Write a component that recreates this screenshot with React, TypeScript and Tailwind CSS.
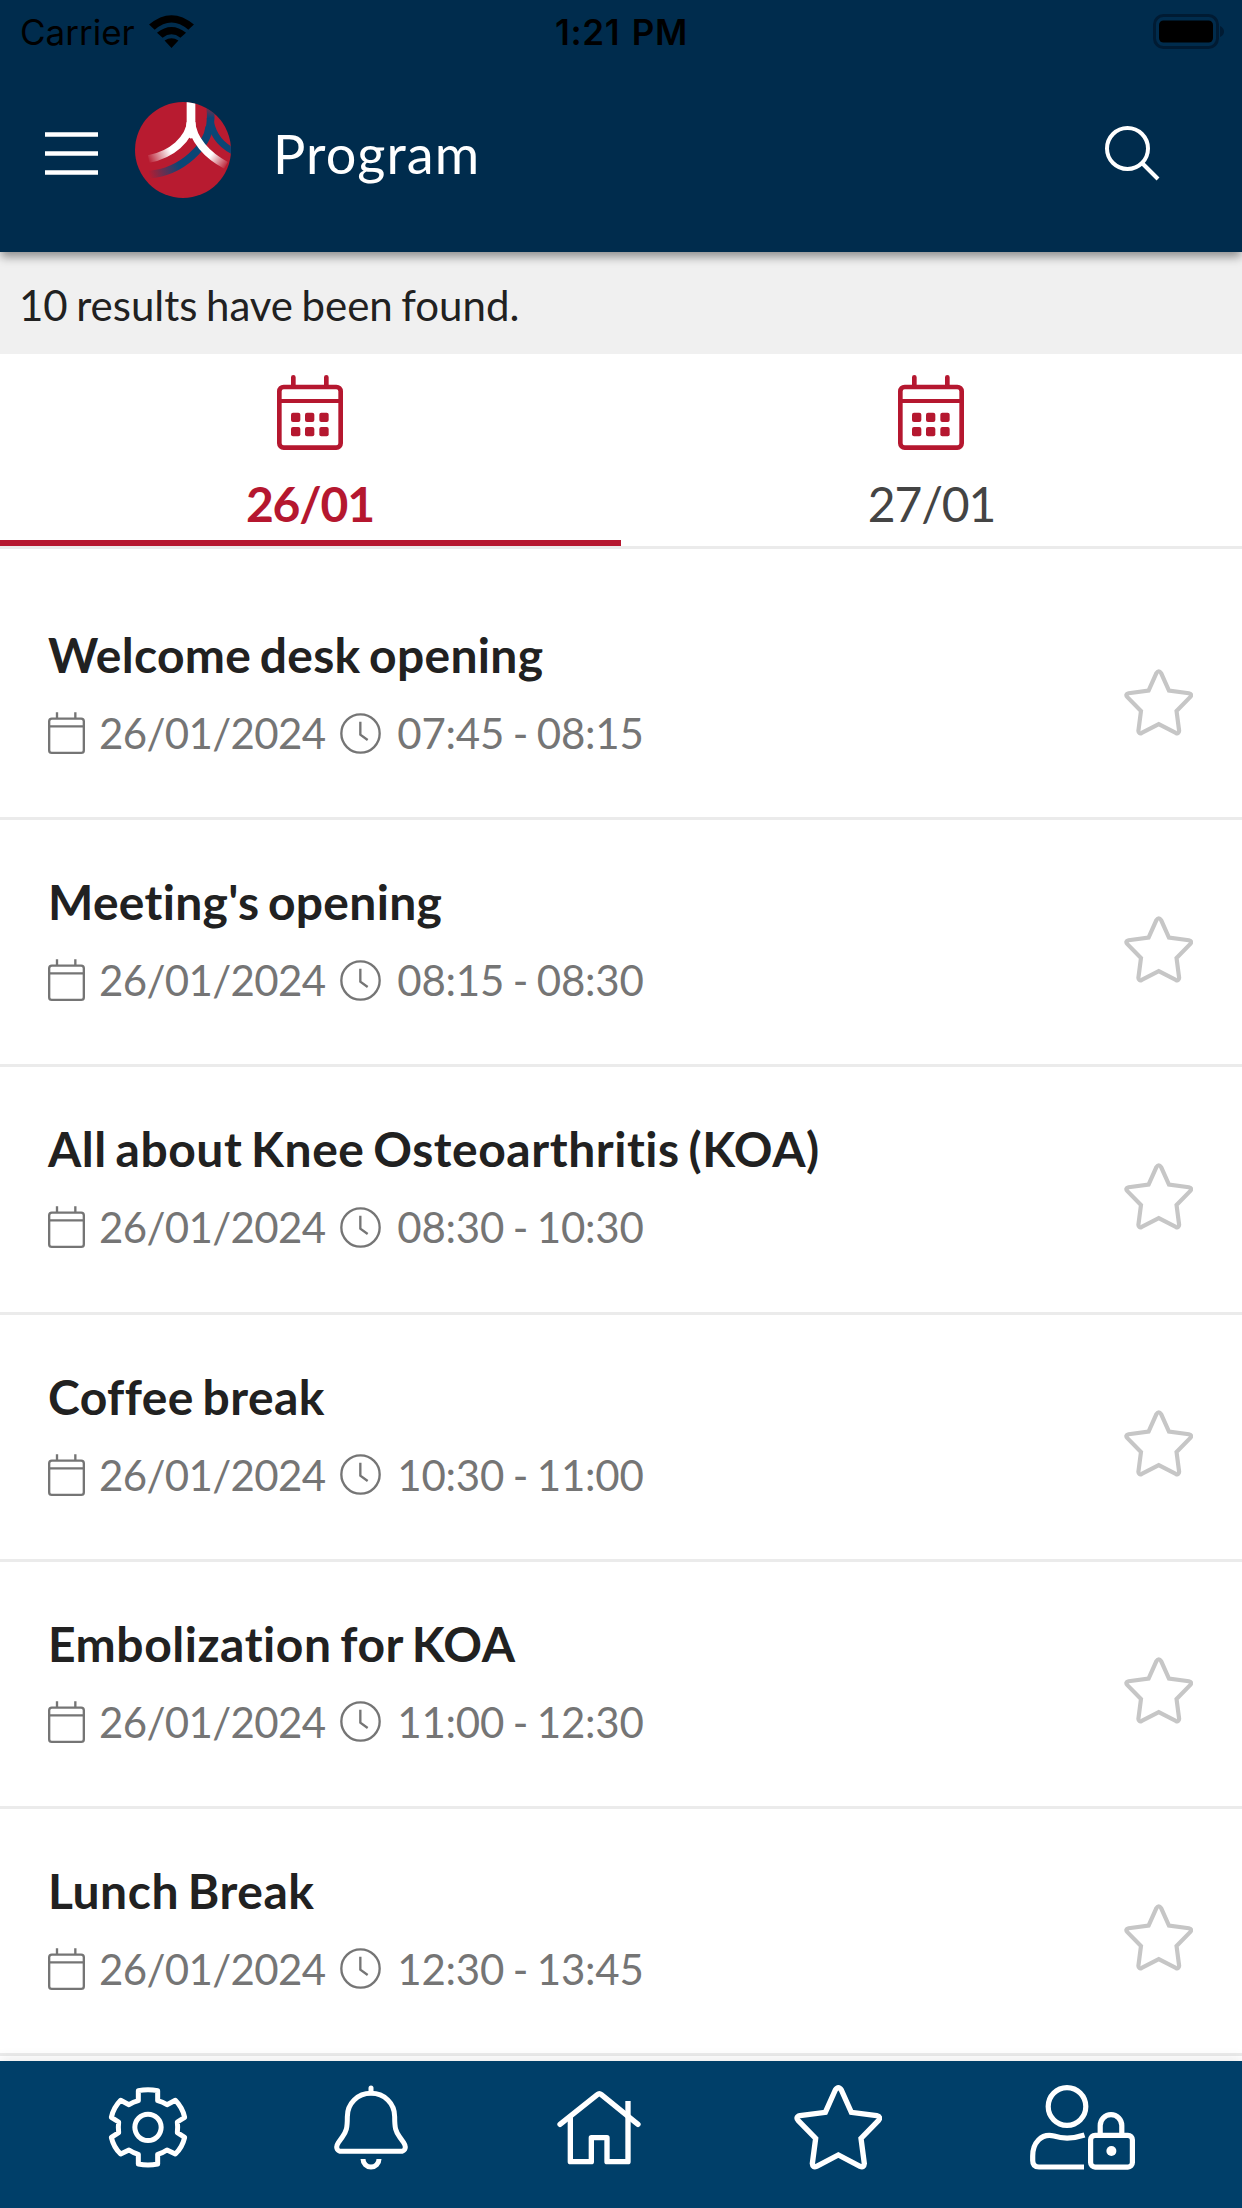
const STAR =
  "M856 127 L886 60 Q895 46 904 60 L934 127 L1010 137 Q1025 141 1015 152 L963 205 L973 281 Q972 294 960 289 L895 255 L830 289 Q818 294 817 281 L827 205 L775 152 Q765 141 780 137 Z";

function Star({ className }: { className: string }) {
  return (
    <svg viewBox="762 45 264 255" className={className} fill="none" stroke="currentColor" strokeWidth="16">
      <path d={STAR} />
    </svg>
  );
}

function TabCalendar() {
  return (
    <svg viewBox="231 105 198 225" className="mr-[2px] h-[75px] w-[66px] text-[#b5172f]" fill="none" stroke="currentColor" strokeWidth="14">
      <rect x="238" y="141" width="184" height="182" rx="13" />
      <path d="M238 183H422" strokeWidth="12" />
      <path d="M280 112V138M379 112V138" strokeLinecap="round" />
      <g fill="currentColor" stroke="none">
        {[273, 315, 358].map((x) => (
          <g key={x}>
            <rect x={x} y="218" width="28" height="28" rx="6" />
            <rect x={x} y="261" width="28" height="28" rx="6" />
          </g>
        ))}
      </g>
    </svg>
  );
}

function SmallCalendar() {
  return (
    <svg viewBox="54 36 111 126" className="h-[42px] w-[37px] shrink-0" fill="none" stroke="currentColor" strokeWidth="7">
      <rect x="57.500" y="56" width="104" height="102.500" rx="8" />
      <path d="M57 79H162M81 37V56M136 37V56" />
    </svg>
  );
}

function Clock() {
  return (
    <svg viewBox="932 38 123 123" className="ml-[15px] size-[41px] shrink-0" fill="none" stroke="currentColor" strokeWidth="7">
      <circle cx="993.5" cy="99.5" r="57.500" />
      <path d="M993 64V103L1015 119" />
    </svg>
  );
}

function Logo() {
  return (
    <svg viewBox="45 36 288 288" className="ml-[37px] size-24 rounded-full">
      <defs>
        <linearGradient id="wl" gradientUnits="userSpaceOnUse" x1="84" y1="212" x2="150" y2="180">
          <stop offset="0" stopColor="#fff" stopOpacity="0" />
          <stop offset="1" stopColor="#fff" />
        </linearGradient>
        <linearGradient id="wr" gradientUnits="userSpaceOnUse" x1="320" y1="232" x2="272" y2="196">
          <stop offset="0" stopColor="#fff" stopOpacity="0" />
          <stop offset="1" stopColor="#fff" />
        </linearGradient>
        <linearGradient id="bl" gradientUnits="userSpaceOnUse" x1="88" y1="262" x2="180" y2="232">
          <stop offset="0" stopColor="#0b4675" stopOpacity="0" />
          <stop offset="1" stopColor="#0b4675" />
        </linearGradient>
        <linearGradient id="bt" gradientUnits="userSpaceOnUse" x1="270" y1="48" x2="270" y2="84">
          <stop offset="0" stopColor="#0b4675" stopOpacity="0.2" />
          <stop offset="1" stopColor="#0b4675" />
        </linearGradient>
      </defs>
      <rect x="45" y="36" width="288" height="288" fill="#b81b30" />
      <g fill="none" strokeWidth="23">
        <path d="M268 110C262 165 190 245 88 254" stroke="url(#bl)" />
        <path d="M270 50C275 80 272 100 267 122" stroke="url(#bt)" />
        <path d="M270 84C274 120 290 158 340 184" stroke="#0b4675" strokeWidth="20" />
        <path d="M214 90C208 150 154 194 86 207" stroke="url(#wl)" />
        <path d="M213 92C218 150 262 196 318 226" stroke="url(#wr)" />
        <path d="M213 30V106" stroke="#fff" strokeWidth="26" />
      </g>
      <path d="M200 96H226L230 132L213 146L194 134Z" fill="#fff" />
    </svg>
  );
}

const sessions = [
  { title: "Welcome desk opening", time: "07:45 - 08:15", tracking: "tracking-[0.300px]" },
  { title: "Meeting's opening", time: "08:15 - 08:30", tracking: "tracking-[0.300px]" },
  { title: "All about Knee Osteoarthritis (KOA)", time: "08:30 - 10:30", tracking: "tracking-[0.550px]" },
  { title: "Coffee break", time: "10:30 - 11:00", tracking: "tracking-[0.450px]" },
  { title: "Embolization for KOA", time: "11:00 - 12:30", tracking: "tracking-[0.550px]" },
  { title: "Lunch Break", time: "12:30 - 13:45", tracking: "tracking-[0.550px]" },
];

export default function App() {
  return (
    <div className="flex h-[2208px] w-[1242px] flex-col overflow-hidden bg-white font-['Lato',sans-serif] text-[#212121] [font-variant-ligatures:none]">
      <header className="relative z-10 h-[252px] shrink-0 bg-[#002c4d] shadow-[0_6px_9px_-1px_rgba(0,0,0,0.4)]">
        <div className="grid h-[60px] grid-cols-3 items-center pl-[20px] pr-[15px] font-['Inter',sans-serif] text-[35px] leading-[60px] text-black">
          <div className="flex items-center gap-[14px]">
            <span className="pt-[2px]">Carrier</span>
            <svg viewBox="448 38 136 100" className="h-[33px] w-[45px]">
              <path d="M448 67Q516 10 584 67L567 83Q516 39 465 83ZM472 92Q516 57 560 92L543 107Q516 86 489 107ZM495 115Q516 102 537 115L516 138Z" />
            </svg>
          </div>
          <span className="pr-[4px] pt-[2px] text-center font-semibold tracking-[0.7px] [word-spacing:2px]">1:21 PM</span>
          <svg viewBox="0 0 74 35" className="h-[35px] w-[74px] justify-self-end">
            <rect x="1.5" y="1.5" width="63" height="32" rx="9" fill="none" stroke="#001b33" strokeWidth="3" />
            <rect x="6" y="6.5" width="54" height="22" rx="4.5" />
            <path d="M67 12Q71 14 71 17.500T67 23Z" fill="#001b33" />
          </svg>
        </div>
        <div className="flex h-[180px] items-center px-[45px] text-white">
          <svg viewBox="0 0 53 43" className="mt-[7px] h-[43px] w-[53px]" stroke="currentColor" strokeWidth="4.500">
            <path d="M0 2.500H53M0 21.500H53M0 40.500H53" />
          </svg>
          <Logo />
          <h1 className="ml-[42px] mt-[8px] text-[54px] leading-[64px] tracking-[1.1px]">Program</h1>
          <svg viewBox="0 0 55 55" className="ml-auto mr-[37px] mt-[6px] size-[55px]" fill="none" stroke="currentColor" strokeWidth="4">
            <circle cx="22.500" cy="22.500" r="20.500" />
            <path d="M37 37L53 53" />
          </svg>
        </div>
      </header>

      <div className="flex h-[102px] shrink-0 items-center bg-[#f0f0f0] pl-[19px] pt-[4px] text-[42px] leading-[50px] tracking-[-0.02px] [word-spacing:-2.200px]">
        10 results have been found.
      </div>

      <div className="grid h-[195px] shrink-0 grid-cols-2 border-b-[3px] border-[#ebebeb] text-[48px] leading-[58px] tracking-[-1.100px]">
        <div className="flex flex-col items-center border-b-[6px] border-[#b5172f] pt-[21px] font-bold text-[#b5172f]">
          <TabCalendar />
          <span className="mr-[1px] mt-[25px]">26/01</span>
        </div>
        <div className="flex flex-col items-center pt-[21px] text-[#444]">
          <TabCalendar />
          <span className="mt-[25px]">27/01</span>
        </div>
      </div>

      <main className="h-[1512px] shrink-0 pt-[24px]">
        {sessions.map((s) => (
          <div key={s.title} className="flex h-[247.200px] items-start justify-between border-b-[3px] border-[#ebebeb] pl-[48px] pr-[49px]">
            <div className="pt-[53px]">
              <h2 className={`text-[48px] font-bold leading-[58px] [word-spacing:-3.500px] ${s.tracking}`}>{s.title}</h2>
              <div className="mt-[24px] flex h-[50px] items-center text-[42px] leading-[50px] text-[#757575]">
                <SmallCalendar />
                <span className="ml-[14px] tracking-[-0.650px]">26/01/2024</span>
                <Clock />
                <span className="ml-[16px] tracking-[-0.250px] [word-spacing:-1.800px]">{s.time}</span>
              </div>
            </div>
            <Star className="mt-[95.500px] h-[67px] w-[69px] text-[#c6c6c6]" />
          </div>
        ))}
      </main>

      <nav className="relative z-10 flex h-[147px] shrink-0 items-start bg-[#003f69] pl-[108px] text-white shadow-[0_-3px_12px_rgba(0,0,0,0.08)]">
        <svg viewBox="54 48 240 249" className="mt-[25px] h-[83px] w-[80px]" fill="none" stroke="currentColor" strokeWidth="15" strokeLinejoin="round">
          <path d="M145 92V62Q174 56 203 62V92Q218 96 231 104L256 91Q277 112 284 142L262 156Q264 172 262 188L284 202Q277 232 256 252L231 240Q218 249 203 253V282Q174 288 145 282V253Q130 249 117 240L92 252Q71 232 64 202L86 188Q84 172 86 156L64 142Q71 112 92 91L117 104Q130 96 145 92Z" />
          <circle cx="174" cy="172" r="39.500" />
        </svg>
        <svg viewBox="732 45 222 255" className="ml-[146px] mt-[24px] h-[85px] w-[74px]" fill="none" stroke="currentColor" strokeWidth="15">
          <path d="M843 70C803 70 772 100 772 140C772 175 769 185 757 201L745 218Q737 230 742 238Q746 244 754 244H932Q940 244 944 238Q949 230 941 218L929 201C917 185 914 175 914 140C914 100 883 70 843 70Z" />
          <path d="M843 54V68" strokeLinecap="round" />
          <path d="M819 267A24 24 0 0 0 867 267" />
        </svg>
        <svg viewBox="51 60 252 225" className="ml-[149px] mt-[29px] h-[75px] w-[84px]" fill="none" stroke="currentColor" strokeWidth="16" strokeLinejoin="round">
          <path d="M60 163L172 74Q178 69 184 74L294 163" strokeLinecap="round" />
          <path d="M91 140V275H154V203H201V275H264V93" />
        </svg>
        <Star className="ml-[153px] mt-[24px] h-[85px] w-[88px]" />
        <svg viewBox="390 55 105 85" className="ml-[148px] mt-[24px] h-[85px] w-[105px]" fill="none" stroke="currentColor" strokeWidth="5.200">
          <circle cx="427" cy="76.500" r="18.800" />
          <path d="M444.500 105Q428 110.500 414 106C401 103 392.700 113 392.700 126V130.500Q392.700 137 399 137H444" />
          <rect x="450.600" y="105.300" width="41.800" height="31.800" rx="4.500" />
          <path d="M460.200 105V95.500a10.800 10.800 0 0 1 21.600 0V105" />
          <circle cx="471.400" cy="121" r="5" fill="currentColor" stroke="none" />
        </svg>
      </nav>
    </div>
  );
}
